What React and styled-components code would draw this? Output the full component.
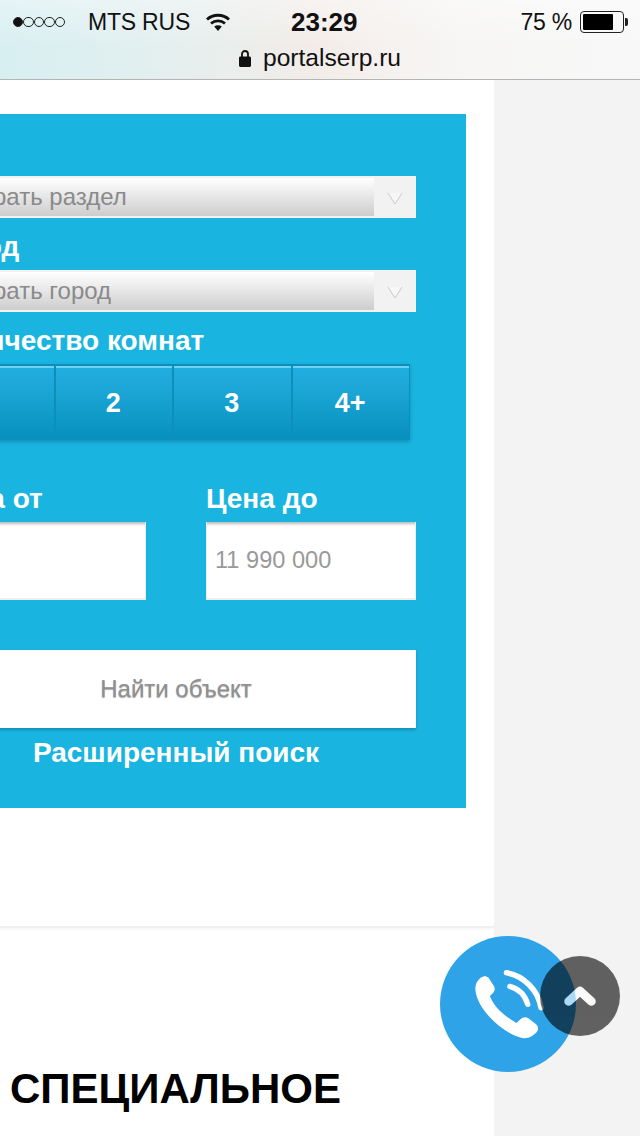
import React from 'react';
import styled, { createGlobalStyle } from 'styled-components';

const Global = createGlobalStyle`
  html, body { margin: 0; padding: 0; background: #fff; }
  * { box-sizing: border-box; }
  body { font-family: "Liberation Sans", Arial, sans-serif; overflow: hidden; }
`;
const Screen = styled.div`
  position: relative; width: 640px; height: 1136px; overflow: hidden;
  display: flex; flex-direction: column;
`;
const Chrome = styled.header`
  height: 80px; flex: none; border-bottom: 1px solid #b4b4b4; color: #111;
  background:
    linear-gradient(180deg, rgba(255,255,255,.35) 0%, rgba(255,255,255,0) 60%),
    linear-gradient(90deg, rgba(214,239,242,.95) 0%, rgba(222,240,241,.75) 24%, rgba(240,236,232,.0) 50%),
    linear-gradient(90deg, #f0ecea 0%, #f3ece8 48%, #f7f6f5 72%, #f8f8f8 100%);
`;
const StatusRow = styled.div`
  height: 43px; display: grid; grid-template-columns: 291px auto 1fr; align-items: center;
  font-size: 23px; padding-top: 1px;
`;
const Carrier = styled.div`display: flex; align-items: center; padding-left: 13px;`;
const Dots = styled.div`display: flex; gap: 0; margin-right: 23px;`;
const Dot = styled.span`
  width: 10.4px; height: 10.4px; border-radius: 50%; border: 1px solid #222;
  background: ${p => (p.$on ? '#111' : 'transparent')};
`;
const CarrierName = styled.span`letter-spacing: -.2px;`;
const WifiIcon = styled.svg`margin-left: 16px; flex: none;`;
const Clock = styled.div`font-weight: 700; font-size: 26px; padding-top: 1px;`;
const Battery = styled.div`display: flex; justify-content: flex-end; align-items: center; padding-right: 12px;`;
const BatteryText = styled.span`margin-right: 8px; letter-spacing: -.2px;`;
const BatteryShell = styled.span`
  width: 44px; height: 22px; border: 1.5px solid #222; border-radius: 4px; padding: 2px; display: block; position: relative;
`;
const BatteryFill = styled.span`display: block; height: 100%; width: 78%; background: #000; border-radius: 1px;`;
const BatteryTip = styled.span`width: 3px; height: 8px; background: #222; border-radius: 0 2px 2px 0; margin-left: 1px;`;
const UrlRow = styled.div`display: flex; justify-content: center; align-items: center; gap: 12px; height: 30px; font-size: 24.6px;`;
const Main = styled.div`flex: 1; display: flex; min-height: 0;`;
const Column = styled.main`width: 494px; flex: none; overflow: hidden; background: #fff;`;
const Sidebar = styled.aside`flex: 1; background: #f3f3f4;`;
const SearchBlock = styled.section`
  height: 848px; padding-top: 34px; border-bottom: 2px solid #f0f0f0; box-shadow: 0 1px 3px rgba(0,0,0,.05);
`;
const Panel = styled.form`
  margin-left: -114px; width: 580px; height: 694px; background: #19b5e0; padding: 62px 50px 30px;
  display: flex; flex-direction: column;
`;
const Label = styled.div`
  height: 52px; line-height: 57px; font-weight: 700; font-size: 28px; color: #fff; white-space: nowrap;
`;
const Select = styled.div`
  height: 42px; background: #f2f2f2; padding: 2px 0; display: flex; flex: none;
`;
const SelectValue = styled.div`
  flex: 1; background: linear-gradient(180deg, #fff 0%, #f0f0f0 30%, #cdcdcd 100%);
  color: #8a8a8a; font-size: 24px; line-height: 38px; padding-left: 10px;
`;
const SelectArrow = styled.div`width: 42px; display: flex; align-items: center; justify-content: center; padding-top: 3px;`;
const Rooms = styled.div`display: flex; width: 474px; height: 76px; flex: none; box-shadow: 0 2px 4px rgba(0,60,90,.3);`;
const Room = styled.div`
  width: 118.5px; flex: none; display: flex; align-items: center; justify-content: center; color: #fff; font-weight: 700; font-size: 27px;
  background: linear-gradient(180deg, #22aee0 0%, #19a4d4 40%, #0790bd 100%);
  border: 1px solid #0d8fbb; border-top: 2px solid #0d8fbb;
  box-shadow: inset 0 2px 0 #6fd0f0; padding: 2px ${p => (p.$lead ? 18 : 1)}px 0 0;
`;
const Prices = styled.div`display: flex; justify-content: space-between; margin-top: 30px; flex: none;`;
const PriceField = styled.div`width: 210px; display: flex; flex-direction: column;`;
const PriceInput = styled.input`
  width: 100%; height: 78px; border: 0; padding: 0 8px; background: #fff; font: 23.6px "Liberation Sans", sans-serif; color: #999;
  border-left: 1px solid #eee; border-right: 1px solid #eee; border-bottom: 2px solid #eee; outline: 0;
  box-shadow: inset 0 4px 3px -2px #bbb; border-radius: 0;
  &::placeholder { color: #999; opacity: 1; }
`;
const Submit = styled.button`
  width: 100%; height: 78px; margin-top: 50px; border: 0; background: #fff; font: 24px "Liberation Sans", sans-serif; color: #909090;
  text-shadow: 0 1px 1px #aaa; box-shadow: 0 2px 3px rgba(0,50,80,.3); flex: none; padding: 0;
`;
const Advanced = styled.a`
  display: block; text-align: center; height: 50px; line-height: 50px; color: #fff; font-weight: 700; font-size: 28px; white-space: nowrap;
`;
const Special = styled.section`padding: 138px 10px 0;`;
const Heading = styled.h2`margin: 0; font-weight: 700; font-size: 42px; line-height: 46px; color: #000; white-space: nowrap;`;
const CallButton = styled.button`
  position: absolute; left: 440px; top: 936px; width: 136px; height: 136px; border-radius: 50%; border: 0; padding: 0;
  background: #2fa3e8; display: flex; align-items: center; justify-content: center;
`;
const TopButton = styled.button`
  position: absolute; left: 540px; top: 956px; width: 80px; height: 80px; border-radius: 50%; border: 0; padding: 0;
  background: #000; opacity: .6; display: flex; align-items: center; justify-content: center;
`;

const SelectBox = ({ children }) => (
  <Select>
    <SelectValue>{children}</SelectValue>
    <SelectArrow>
      <svg width="16" height="13" viewBox="0 0 16 13"><path d="M1 1 8 12 15 1z" fill="#f7f7f7" /><path d="M1 1 8 12 15 1" fill="none" stroke="#c9c9c9" strokeWidth="1" /></svg>
    </SelectArrow>
  </Select>
);

export default function App() {
  return (
    <Screen>
      <Global />
      <Chrome>
        <StatusRow>
          <Carrier>
            <Dots>
              <Dot $on />
              <Dot /><Dot /><Dot /><Dot />
            </Dots>
            <CarrierName>MTS RUS</CarrierName>
            <WifiIcon width="24" height="18" viewBox="0 0 24 18">
              <path d="M1 6.500C7 .8 17 .8 23 6.500" fill="none" stroke="#111" strokeWidth="2.800" />
              <path d="M5 10.500c4-3.600 10-3.600 14 0" fill="none" stroke="#111" strokeWidth="2.800" />
              <path d="M8.200 13.400c2.200-1.700 5.400-1.700 7.600 0L12 18z" fill="#111" />
            </WifiIcon>
          </Carrier>
          <Clock>23:29</Clock>
          <Battery>
            <BatteryText>75 %</BatteryText>
            <BatteryShell><BatteryFill /></BatteryShell>
            <BatteryTip />
          </Battery>
        </StatusRow>
        <UrlRow>
          <svg width="12" height="18" viewBox="0 0 12 18"><path d="M3 8V5a3 3 0 0 1 6 0v3" fill="none" stroke="#111" strokeWidth="1.800" /><rect x="0" y="7.500" width="12" height="10.500" rx="1.400" fill="#111" /></svg>
          <span>portalserp.ru</span>
        </UrlRow>
      </Chrome>
      <Main>
        <Column>
          <SearchBlock>
            <Panel>
              <SelectBox>Выбрать раздел</SelectBox>
              <Label>Город</Label>
              <SelectBox>Выбрать город</SelectBox>
              <Label>Количество комнат</Label>
              <Rooms>
                <Room $lead>1</Room><Room>2</Room><Room>3</Room><Room>4+</Room>
              </Rooms>
              <Prices>
                <PriceField>
                  <Label>Цена от</Label>
                  <PriceInput />
                </PriceField>
                <PriceField>
                  <Label>Цена до</Label>
                  <PriceInput placeholder="11 990 000" />
                </PriceField>
              </Prices>
              <Submit type="button">Найти объект</Submit>
              <Advanced>Расширенный поиск</Advanced>
            </Panel>
          </SearchBlock>
          <Special>
            <Heading>СПЕЦИАЛЬНОЕ</Heading>
          </Special>
        </Column>
        <Sidebar />
      </Main>
      <CallButton type="button" aria-label="Позвонить">
        <svg width="73" height="75" viewBox="150 140 220 225">
          <path fill="#fff" d="M172 176C182 165 193 165 200 172L216 197C221 206 218 214 210 221L204 227C214 256 244 286 284 308L296 297C303 290 312 289 320 294L343 312C351 319 351 330 343 338C334 348 320 356 304 354C250 345 163 270 160 205C160 192 165 183 172 176Z" />
          <path fill="none" stroke="#fff" strokeWidth="17" strokeLinecap="round" d="M254 157C305 165 350 210 358 262" />
          <path fill="none" stroke="#fff" strokeWidth="16" strokeLinecap="round" d="M264 198C290 205 310 225 318 252" />
        </svg>
      </CallButton>
      <TopButton type="button" aria-label="Наверх">
        <svg width="32" height="22" viewBox="0 0 32 22"><path d="M4.500 16.500 16 6l11.500 10.500" fill="none" stroke="#fff" strokeWidth="8.500" strokeLinecap="round" strokeLinejoin="round" /></svg>
      </TopButton>
    </Screen>
  );
}
